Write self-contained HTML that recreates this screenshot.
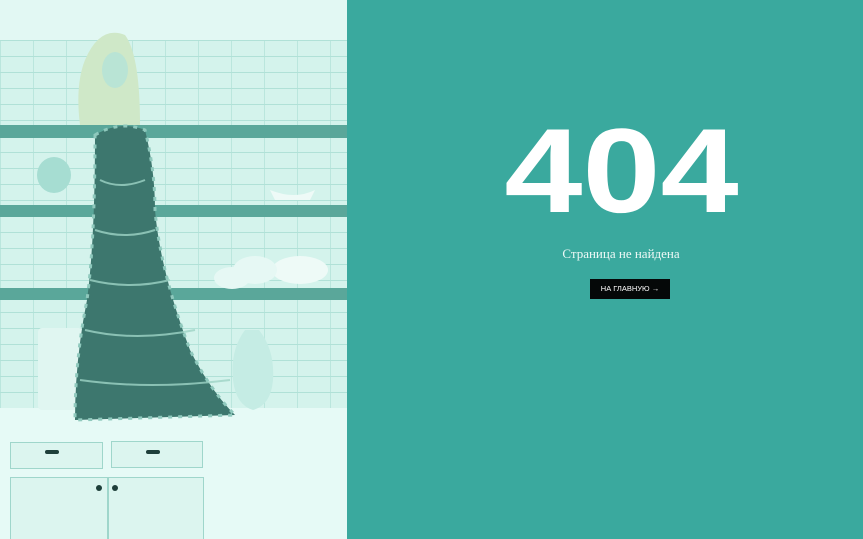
<!DOCTYPE html>
<html><head><meta charset="utf-8"><style>
html,body{margin:0;padding:0;width:863px;height:539px;overflow:hidden;background:#3aa99e}
.photo{position:absolute;left:0;top:0;width:347px;height:539px;background:#d4f3ec;overflow:hidden}
.tiles{position:absolute;left:0;top:40px;width:347px;height:380px;
background-image:linear-gradient(#a8ddd3 1px,transparent 1px),linear-gradient(90deg,#b4e3da 1px,transparent 1px);
background-size:33px 16px,33px 16px;opacity:.8}
.top{position:absolute;left:0;top:0;width:347px;height:40px;background:#e2f8f3}
.shelf{position:absolute;left:0;width:347px;background:#5aa79a}
.counter{position:absolute;left:0;top:408px;width:347px;height:131px;background:#e6faf6}
.cab{position:absolute;border:1px solid #9fd6cb;background:#dcf5ef}
.k{position:absolute;background:#1e3f3a;border-radius:3px}
.t{position:absolute;left:505px;top:111px;width:233px;text-align:center;font:bold 120px/1 "Liberation Sans",sans-serif;color:#fff;transform:scaleX(1.17);transform-origin:center}
.s{position:absolute;left:521px;top:246px;width:200px;text-align:center;font:13px "Liberation Serif","Noto Serif CJK SC",serif;color:#eef9f7}
.b{position:absolute;left:590px;top:279px;width:80px;height:20px;background:#050808;color:#fff;font:7.5px/20px "Liberation Sans",sans-serif;text-align:center}
</style></head><body>
<div class="photo">
<div class="top"></div>
<div class="tiles"></div>
<div class="shelf" style="top:125px;height:13px"></div>
<div class="shelf" style="top:205px;height:12px"></div>
<div class="shelf" style="top:288px;height:12px"></div>
<div class="counter"></div>
<div class="cab" style="left:10px;top:442px;width:91px;height:25px"></div>
<div class="cab" style="left:111px;top:441px;width:90px;height:25px"></div>
<div class="cab" style="left:10px;top:477px;width:96px;height:62px"></div>
<div class="cab" style="left:108px;top:477px;width:94px;height:62px"></div>
<div class="k" style="left:45px;top:450px;width:14px;height:4px"></div>
<div class="k" style="left:146px;top:450px;width:14px;height:4px"></div>
<div class="k" style="left:96px;top:485px;width:6px;height:6px"></div>
<div class="k" style="left:112px;top:485px;width:6px;height:6px"></div>
<svg width="347" height="539" style="position:absolute;left:0;top:0">
<ellipse cx="54" cy="175" rx="17" ry="18" fill="#a6ddd2"/>
<ellipse cx="300" cy="270" rx="28" ry="14" fill="#eefaf7"/>
<ellipse cx="255" cy="270" rx="22" ry="14" fill="#e6f8f4"/>
<ellipse cx="232" cy="278" rx="18" ry="11" fill="#e6f8f4"/>
<path d="M270 190 q25 10 45 0 l-5 10 h-35z" fill="#eefaf7"/>
<path d="M245 330 q-15 20 -12 50 q3 25 20 30 q18 -5 20 -30 q2 -30 -14 -50z" fill="#c5ece4"/>
<rect x="38" y="328" width="45" height="82" rx="4" fill="#e0f6f1"/>
<path d="M85 60 q15 -35 40 -25 q15 20 15 90 l-60 0 q-5 -40 5 -65z" fill="#cfe8c8"/>
<ellipse cx="115" cy="70" rx="13" ry="18" fill="#b9e4d5"/>
<path d="M95 135 q25 -15 50 -5 q10 40 10 80 q5 60 35 140 q20 40 45 65 l-160 5 q0 -60 12 -120 q8 -60 8 -165z" fill="#3d776e"/>
<path d="M95 135 q25 -15 50 -5 q10 40 10 80 q5 60 35 140 q20 40 45 65 l-160 5 q0 -60 12 -120 q8 -60 8 -165z" fill="none" stroke="#8fc9bd" stroke-width="3" stroke-dasharray="4 6"/>
<g stroke="#9ed3c6" stroke-width="2" fill="none" opacity=".8">
<path d="M100 180 q20 10 45 0M95 230 q30 10 60 0M90 280 q40 10 80 0M85 330 q50 12 110 0M80 380 q70 10 150 0"/>
</g>
</svg>
</div>
<div class="t">404</div>
<div class="s">Страница не найдена</div>
<div class="b">НА ГЛАВНУЮ →</div>
</body></html>
